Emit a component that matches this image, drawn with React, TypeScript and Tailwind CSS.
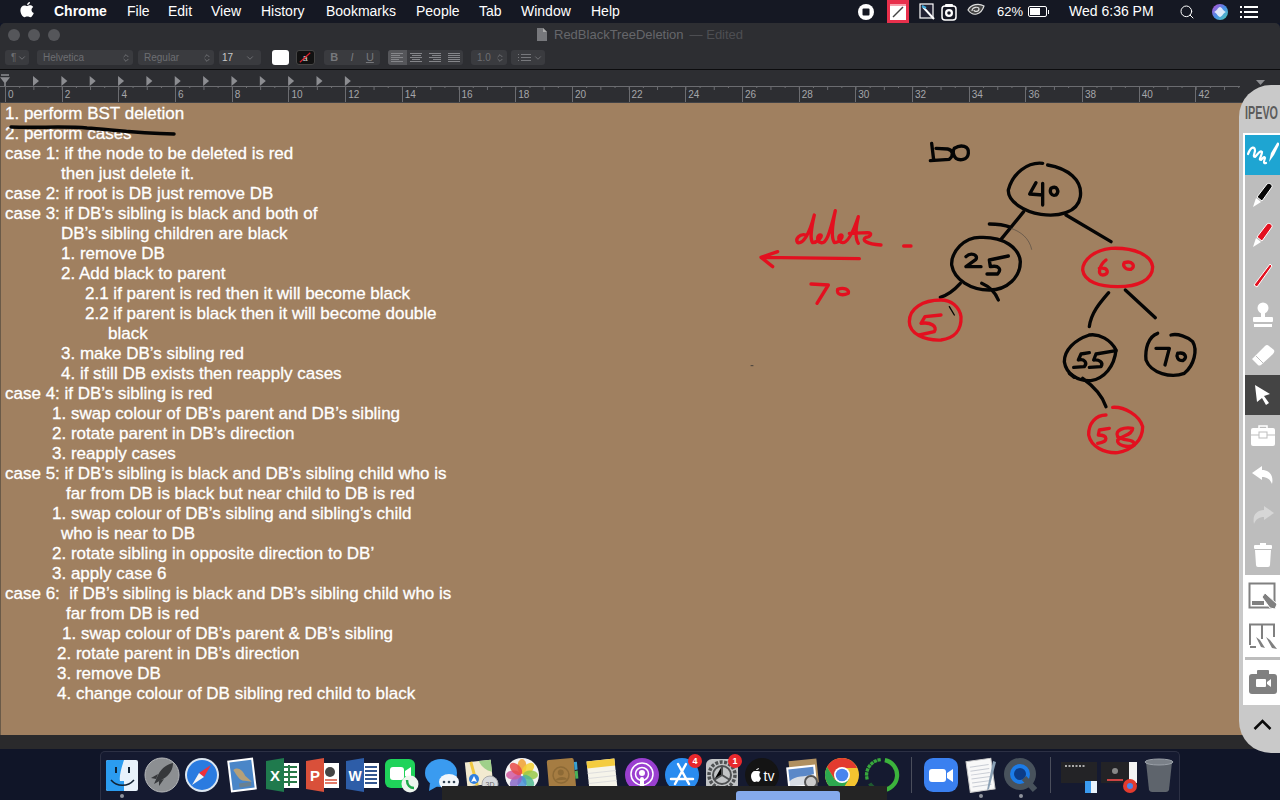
import React from "react";
import { ChevronDown, ChevronsUpDown, Search } from "lucide-react";

const sans = "font-['Liberation_Sans',Arial,sans-serif]";

const lines: [number, string][] = [
  [5, "1. perform BST deletion"],
  [5, "2. perform cases"],
  [5, "case 1: if the node to be deleted is red"],
  [61, "then just delete it."],
  [5, "case 2: if root is DB just remove DB"],
  [5, "case 3: if DB’s sibling is black and both of"],
  [61, "DB’s sibling children are black"],
  [61, "1. remove DB"],
  [61, "2. Add black to parent"],
  [85, "2.1 if parent is red then it will become black"],
  [85, "2.2 if parent is black then it will become double"],
  [108, "black"],
  [61, "3. make DB’s sibling red"],
  [61, "4. if still DB exists then reapply cases"],
  [5, "case 4: if DB’s sibling is red"],
  [52, "1. swap colour of DB’s parent and DB’s sibling"],
  [52, "2. rotate parent in DB’s direction"],
  [52, "3. reapply cases"],
  [5, "case 5: if DB’s sibling is black and DB’s sibling child who is"],
  [66, "far from DB is black but near child to DB is red"],
  [52, "1. swap colour of DB’s sibling and sibling’s child"],
  [61, "who is near to DB"],
  [52, "2. rotate sibling in opposite direction to DB’"],
  [52, "3. apply case 6"],
  [5, "case 6:  if DB’s sibling is black and DB’s sibling child who is"],
  [66, "far from DB is red"],
  [62, "1. swap colour of DB’s parent & DB’s sibling"],
  [57, "2. rotate parent in DB’s direction"],
  [57, "3. remove DB"],
  [57, "4. change colour of DB sibling red child to black"],
];

const menus: [string, number][] = [
  ["File", 127], ["Edit", 168], ["View", 211], ["History", 261], ["Bookmarks", 326],
  ["People", 416], ["Tab", 479], ["Window", 521], ["Help", 591],
];

function MenuBar() {
  return (
    <div className={`h-[23px] shrink-0 flex items-center bg-[#151823] text-white text-[14px] ${sans}`}>
      <svg width="14" height="16" viewBox="0 0 14 16" className="ml-[20px] mb-[3px]" fill="white">
        <path d="M10 0c.1 1.300-1.100 3-2.900 3C7 1.600 8.400.2 10 0zM7.200 4c.8 0 1.700-.7 3-.7 1.100 0 2.300.6 3 1.600-2.500 1.500-2.100 5 .6 6.100-.7 1.800-2.100 4.300-3.500 4.300-1.100 0-1.500-.7-2.900-.7-1.400 0-1.900.7-2.900.7C2.800 15.300.4 11.600.4 8.300c0-3.100 2-4.900 4-4.900 1.200 0 2.100.6 2.800.6z" />
      </svg>
      <span className="font-bold ml-[20px] w-[73px]">Chrome</span>
      {menus.map(([m, x], i) => (
        <span key={m} style={{ width: (menus[i + 1]?.[1] ?? 620) - x }}>{m}</span>
      ))}
      <svg width="16" height="16" viewBox="0 0 16 16" className="ml-[238px]">
        <circle cx="8" cy="8" r="8" fill="white" />
        <rect x="4.500" y="4.500" width="7" height="7" rx="1" fill="#151823" />
      </svg>
      <div className="ml-[13px] w-[22px] h-[23px] bg-[#e8304c] flex items-center justify-center">
        <svg width="16" height="16" viewBox="0 0 16 16">
          <rect width="16" height="16" fill="white" />
          <path d="M3 13 L13 3" stroke="#444" strokeWidth="1.500" />
          <rect y="0" width="16" height="2" fill="#f8a0ac" />
        </svg>
      </div>
      <svg width="17" height="18" viewBox="0 0 17 18" className="ml-[10px]">
        <rect x="1" y="1" width="13" height="14" fill="#223" stroke="white" strokeWidth="1.200" />
        <path d="M4 4 L15 16" stroke="white" strokeWidth="2" />
        <path d="M3 3 L7 5" stroke="#39a9dc" strokeWidth="2" />
      </svg>
      <svg width="16" height="18" viewBox="0 0 16 18" className="ml-[5px]">
        <rect x="1" y="3" width="14" height="14" rx="3" fill="none" stroke="white" strokeWidth="1.500" />
        <circle cx="8" cy="10" r="4" fill="white" />
        <circle cx="8" cy="10" r="1.800" fill="#151823" />
        <rect x="4" y="1" width="8" height="3" rx="1" fill="white" />
      </svg>
      <svg width="18" height="14" viewBox="0 0 18 14" className="ml-[10px] mb-[3px]" fill="none" stroke="#ddd" strokeWidth="1.200">
        <path d="M1 7 C4 1 12 0 17 3 C14 12 6 14 1 7z" fill="#444" />
        <path d="M5 8 C5 4 12 3 12 6 C12 9 7 9 7 7" />
      </svg>
      <span className="ml-[12px] text-[13px]">62%</span>
      <div className="ml-[5px] w-[19px] h-[11px] border border-white rounded-[2px] p-[1px]">
        <div className="w-[10px] h-full bg-white" />
      </div>
      <div className="w-[1px] h-[4px] bg-white ml-[1px]" />
      <span className="ml-[20px]">Wed 6:36 PM</span>
      <Search size={16} strokeWidth={1.500} className="ml-[25px]" />
      <svg width="16" height="16" viewBox="0 0 16 16" className="ml-[17px]">
        <defs>
          <linearGradient id="siri" x1="0" y1="0" x2="1" y2="1">
            <stop offset="0" stopColor="#c04ad0" />
            <stop offset="0.500" stopColor="#4a8ee8" />
            <stop offset="1" stopColor="#50d0b0" />
          </linearGradient>
        </defs>
        <circle cx="8" cy="8" r="8" fill="url(#siri)" />
        <path d="M2 8 C5 7 6 3 8 3 C10 3 11 7 14 8 C11 9 10 13 8 13 C6 13 5 9 2 8z" fill="white" opacity="0.800" />
      </svg>
      <svg width="18" height="12" viewBox="0 0 18 12" className="ml-[12px]" fill="white">
        <rect width="2" height="2" /><rect x="4" width="14" height="2" />
        <rect y="5" width="2" height="2" /><rect x="4" y="5" width="14" height="2" />
        <rect y="10" width="2" height="2" /><rect x="4" y="10" width="14" height="2" />
      </svg>
    </div>
  );
}

function Select({ w, label, ml, stepper = true }: { w: number; label: string; ml: number; stepper?: boolean }) {
  return (
    <div style={{ width: w, marginLeft: ml }} className="h-[15px] rounded-[3px] bg-[#3a3b3f] flex items-center justify-between pl-[6px] pr-[2px] text-[10px] text-[#6d6e72]">
      <span>{label}</span>
      {stepper ? <ChevronsUpDown size={10} color="#77787c" /> : <ChevronDown size={10} color="#77787c" />}
    </div>
  );
}

function AlignIcon({ kind, active }: { kind: number; active?: boolean }) {
  const rows = [12, 9, 12, 8, 12];
  return (
    <div className={`w-[18.750px] h-full flex flex-col justify-center gap-[1px] ${active ? "bg-[#55565a]" : ""} ${kind === 0 ? "items-start pl-[3px]" : kind === 1 ? "items-center" : "items-end pr-[3px]"}`}>
      {rows.map((r, i) => (
        <div key={i} style={{ width: kind === 3 ? 12 : r }} className="h-[1px] bg-[#85868a]" />
      ))}
    </div>
  );
}

function Toolbar() {
  return (
    <div className={`h-[47px] shrink-0 bg-[#2d2e32] border-b border-[#0c0c0e] rounded-t-[5px] ${sans}`}>
      <div className="h-[23px] flex items-center relative">
        <div className="ml-[8px] flex gap-[8px]">
          <div className="w-[12px] h-[12px] rounded-full bg-[#55565a]" />
          <div className="w-[12px] h-[12px] rounded-full bg-[#55565a]" />
          <div className="w-[12px] h-[12px] rounded-full bg-[#55565a]" />
        </div>
        <svg width="10" height="13" viewBox="0 0 10 13" className="ml-[477px]">
          <path d="M0 0h6l4 4v9H0z" fill="#77787c" />
          <path d="M6 0v4h4z" fill="#aaa" />
        </svg>
        <span className="ml-[7px] text-[13px] text-[#66676b]">RedBlackTreeDeletion</span>
        <span className="ml-[6px] text-[13px] text-[#4d4e52]">— Edited</span>
      </div>
      <div className="mt-[4px] flex items-center">
        <Select w={24} label="¶" ml={5} stepper={false} />
        <Select w={96} label="Helvetica" ml={8} />
        <Select w={76} label="Regular" ml={5} />
        <div className="ml-[5px] w-[42px] h-[15px] rounded-[3px] bg-[#3a3b3f] flex text-[10px] text-[#c8c8c8] items-center pl-[3px]">
          <span className="w-[23px]">17</span>
          <ChevronDown size={10} color="#77787c" />
        </div>
        <div className="ml-[11px] w-[17px] h-[15px] rounded-[3px] bg-white" />
        <div className="ml-[7px] w-[19px] h-[15px] rounded-[3px] bg-[#111] border border-[#444]">
          <svg viewBox="0 0 19 15" className="w-full h-full">
            <text x="9" y="11" fontSize="10" fill="#ddd" textAnchor="middle">a</text>
            <path d="M3 13 L15 2" stroke="#e0202c" strokeWidth="1.300" />
          </svg>
        </div>
        <div className="ml-[9px] w-[56px] h-[15px] rounded-[3px] bg-[#3a3b3f] flex text-[11px] text-[#77787c] items-center justify-around">
          <b>B</b><i>I</i><u>U</u>
        </div>
        <div className="ml-[8px] w-[75px] h-[15px] rounded-[3px] bg-[#3a3b3f] flex overflow-hidden">
          <AlignIcon kind={0} active /><AlignIcon kind={1} /><AlignIcon kind={2} /><AlignIcon kind={3} />
        </div>
        <Select w={36} label="1.0" ml={8} />
        <div className="ml-[4px] w-[34px] h-[15px] rounded-[3px] bg-[#3a3b3f] flex items-center justify-end pr-[2px] gap-[2px]">
          <svg width="13" height="8" viewBox="0 0 13 8" fill="#77787c">
            <rect width="1" height="1" /><rect x="3" width="10" height="1" />
            <rect y="3" width="1" height="1" /><rect x="3" y="3" width="10" height="1" />
            <rect y="6" width="1" height="1" /><rect x="3" y="6" width="10" height="1" />
          </svg>
          <ChevronDown size={10} color="#77787c" />
        </div>
      </div>
    </div>
  );
}

function Ruler() {
  const labels = Array.from({ length: 22 }, (_, i) => i * 2);
  return (
    <div className={`relative h-[33px] shrink-0 bg-[#2d2e32] border-b border-[#414246] ${sans}`}>
      <svg width="1280" height="33" className="absolute left-0 top-0">
        <path d="M0 16.500 H1240" stroke="#6b6c70" strokeWidth="1" />
        {Array.from({ length: 88 }, (_, i) => (
          <path key={i} d={`M${5.5 + i * 14.175} 16 V${i % 2 ? 18 : 20}`} stroke="#6b6c70" strokeWidth="1" />
        ))}
        {Array.from({ length: 12 }, (_, i) => (
          <path key={i} d={`M${33 + i * 28.35} 6 L${39 + i * 28.35} 11 L${33 + i * 28.35} 16z`} fill="#8c8d91" />
        ))}
        <path d="M1 5 H9 M1.500 8 H8.500 L5 12.500z M5 12 V16" stroke="#8c8d91" strokeWidth="1.500" fill="#8c8d91" />
        <path d="M1256 10 H1265 L1260.500 15z" fill="#8c8d91" />
      </svg>
      <div className="absolute left-[5px] top-[17px] flex text-[10px] leading-[15px] text-[#a5a6aa]">
        {labels.map((n) => (
          <div key={n} className="w-[56.700px] h-[15px] border-l border-[#6b6c70] pl-[2px]">{n}</div>
        ))}
      </div>
    </div>
  );
}

// pen strokes drawn on screen, coordinates taken at 3x the crop
function Sketch() {
  const black = "#050505";
  const red = "#e3101f";
  return (
    <svg width="480" height="350" viewBox="0 0 1440 1050" fill="none" strokeLinecap="round" strokeLinejoin="round" className="absolute left-[740px] top-[17px]">
      <g stroke={black} strokeWidth="10">
        <path d="M572 70 L578 120 M568 122 L625 118 C640 105 635 90 620 87 L585 85 M640 85 C660 72 685 78 682 100 C680 122 655 122 645 115 C635 105 635 92 640 85" />
        <path d="M905 130 C860 125 815 160 802 210 C800 245 850 275 900 283 C950 290 1010 280 1018 230 C1025 180 980 145 920 135" />
        <path d="M885 188 L866 222 L905 225 M905 190 L905 255 M930 205 C950 195 955 215 945 225 C930 230 925 215 930 205" />
        <path d="M848 275 L780 358 M745 312 C770 312 790 315 810 322 M975 285 L1110 365" />
        <path d="M720 352 C670 350 630 395 632 435 C640 480 690 510 745 510 C800 510 838 470 838 425 C835 385 790 350 720 352" />
        <path d="M675 410 C690 395 712 405 705 418 L675 440 L720 440 M802 408 L745 420 L748 440 C775 435 782 448 770 462 L738 462" />
        <path d="M658 490 C640 510 620 525 598 532 M722 490 C745 500 762 515 772 540" />
        <path d="M1103 518 C1075 550 1050 580 1045 620 M1153 510 L1243 593" />
        <path d="M1045 645 C1000 660 970 690 970 725 C975 760 1010 785 1050 782 C1090 775 1120 740 1125 690 C1110 660 1075 640 1045 645" />
        <path d="M1045 698 L1020 702 L1012 720 C1030 715 1040 728 1030 740 L998 742 M1125 692 L1065 702 L1058 720 C1075 718 1088 728 1080 740 L1045 742" />
        <path d="M1250 640 C1220 650 1212 690 1215 720 C1230 760 1290 775 1330 760 C1360 735 1370 690 1355 665 C1340 650 1310 640 1290 645" />
        <path d="M1245 685 L1285 685 L1272 735 M1310 700 C1335 695 1340 715 1325 722 C1310 722 1305 710 1310 700" />
        <path d="M985 760 L1000 772 M1025 775 C1060 800 1085 830 1095 860" />
      </g>
      <path d="M625 560 L640 585" stroke={black} strokeWidth="4" />
      <path d="M810 325 C840 335 865 355 872 388" stroke="#3a3a3a" strokeWidth="1.500" />
      <path d="M30 737 H36" stroke="#333" strokeWidth="2.500" />
      <g stroke={red} strokeWidth="10">
        <path d="M600 540 C545 540 505 565 505 605 C505 640 550 662 600 660 C640 655 662 630 660 590 C655 560 630 540 600 540" />
        <path d="M600 585 L552 590 L540 610 C570 605 590 620 580 635 L535 645" />
        <path d="M1110 385 C1060 390 1025 420 1025 450 C1030 485 1075 500 1130 500 C1190 500 1235 480 1235 440 C1230 405 1180 382 1110 385" />
        <path d="M1095 420 C1075 435 1068 465 1085 465 C1105 465 1105 440 1075 445 M1150 428 C1175 420 1185 440 1170 448 C1150 450 1145 435 1150 428" />
        <path d="M1095 885 C1065 885 1042 910 1043 945 C1050 980 1090 1000 1130 998 C1175 990 1205 960 1205 920 C1195 885 1150 860 1115 862" />
        <path d="M1105 925 L1075 930 L1072 945 C1100 945 1105 965 1070 970 M1175 925 C1150 920 1120 930 1130 950 C1150 965 1180 955 1180 975 C1160 985 1125 975 1130 960 C1145 945 1175 945 1175 925" />
        <path d="M195 345 C175 340 162 358 170 368 C185 372 205 345 220 285 C212 320 205 355 215 368 C228 368 245 350 240 345 C228 342 225 365 240 368 C255 372 265 345 283 272 C275 310 268 350 280 368 C295 368 308 350 302 345 C290 342 290 368 305 368 C320 368 335 340 352 290 C345 320 342 355 352 370 M325 340 L380 338 C395 338 390 350 375 352 C360 360 375 372 420 375" />
        <path d="M62 412 L355 416 M110 395 L60 412 L95 440" />
        <path d="M210 492 L262 495 L228 550 M290 508 C310 500 325 510 322 520 C305 528 285 525 290 508" />
        <path d="M488 378 H510" />
      </g>
    </svg>
  );
}

function Content() {
  return (
    <div className="relative flex-1 bg-[#a08060] overflow-hidden border-l border-[#6a5a48]">
      <div className={`pt-[1px] text-[17px] leading-[20px] text-white whitespace-pre [-webkit-text-stroke:0.3px_white] ${sans}`}>
        {lines.map(([x, t], i) => (
          <div key={i} style={{ paddingLeft: x - 1 }}>{t}</div>
        ))}
      </div>
      <svg width="180" height="12" viewBox="0 0 180 12" fill="none" className="absolute left-[6px] top-[22px]">
        <path d="M4 2 C30 3 60 1 80 3 C100 4 125 8 167 9" stroke="#050505" strokeWidth="3.500" strokeLinecap="round" />
      </svg>
      <Sketch />
    </div>
  );
}

const Cell = ({ bg = "", children }: { bg?: string; children: React.ReactNode }) => (
  <div className={`h-10 flex items-center justify-center ${bg}`}>{children}</div>
);

function Panel() {
  return (
    <div className={`absolute right-0 top-[85px] w-[41px] h-[668px] bg-[#c9c9c9] rounded-l-[32px] flex flex-col ${sans}`}>
      <div className="h-[48px] shrink-0 pt-[19px] pl-[6px]">
        <div className="w-[35px] origin-left scale-x-[0.6] text-[18px] leading-[18px] font-bold text-[#5c5c5c] whitespace-nowrap">IPEVO</div>
      </div>
      <div className="ml-[4px] border-l-2 border-t-2 border-white bg-[#bdbdbd]">
        <Cell bg="bg-[#1ea5d2]">
          <svg width="32" height="30" viewBox="0 0 32 30" fill="white">
            <path d="M1 14 C4 6 8 6 8 11 C7 15 6 17 8 17 C11 14 13 10 15 12 C15 16 11 20 14 20 C16 18 17 16 18 18 C17 21 16 24 19 23" fill="none" stroke="white" strokeWidth="2.200" strokeLinecap="round" />
            <path d="M22 22 L24 13 L30 3 C31 2 33 3 32 5 L27 15z" />
          </svg>
        </Cell>
        <Cell>
          <svg width="22" height="26" viewBox="0 0 22 26">
            <path d="M1 25 L4 16 L9 20z" fill="white" />
            <path d="M5 15 L15 2 C17 0 21 3 20 5 L10 19z" fill="#050505" stroke="white" strokeWidth="1" />
          </svg>
        </Cell>
        <Cell>
          <svg width="22" height="26" viewBox="0 0 22 26">
            <path d="M1 25 L4 16 L9 20z" fill="white" />
            <path d="M5 15 L15 2 C17 0 21 3 20 5 L10 19z" fill="#e3101f" stroke="white" strokeWidth="1" />
          </svg>
        </Cell>
        <Cell>
          <svg width="22" height="26" viewBox="0 0 22 26">
            <path d="M2 23 L18 2 L20 4 L5 25z" fill="#e3101f" stroke="white" strokeWidth="1" />
          </svg>
        </Cell>
        <Cell>
          <svg width="22" height="26" viewBox="0 0 22 26" fill="white">
            <circle cx="11" cy="6" r="5.500" />
            <rect x="9" y="9" width="4" height="6" />
            <rect x="1" y="15" width="20" height="5" rx="1" />
            <rect x="2" y="22" width="18" height="3" />
          </svg>
        </Cell>
        <Cell>
          <svg width="24" height="24" viewBox="0 0 24 24" fill="white">
            <path d="M1 16 L14 3 Q16 1 18 3 L23 7 Q24 9 22 11 L10 22 Q8 23 7 22z" />
            <path d="M5 13 L12 20" stroke="#bdbdbd" strokeWidth="1" />
          </svg>
        </Cell>
        <Cell bg="bg-[#444444]">
          <svg width="18" height="22" viewBox="0 0 18 22" fill="white">
            <path d="M1 1 L16 10 L10 12 L15 19 L12 21 L8 14 L3 18z" />
          </svg>
        </Cell>
        <Cell>
          <svg width="24" height="22" viewBox="0 0 24 22">
            <path d="M8 4 V2 H16 V4" fill="none" stroke="white" strokeWidth="1.500" />
            <rect y="4" width="24" height="18" rx="2" fill="white" />
            <path d="M0 11 H24" stroke="#bdbdbd" strokeWidth="1" />
            <rect x="8" y="8" width="8" height="6" fill="white" stroke="#bdbdbd" />
          </svg>
        </Cell>
        <Cell>
          <svg width="22" height="18" viewBox="0 0 22 18" fill="white">
            <path d="M0 7 L10 0 V4 C17 4 22 9 20 18 C18 13 15 11 10 11 V14z" />
          </svg>
        </Cell>
        <Cell>
          <svg width="22" height="18" viewBox="0 0 22 18" fill="#d6d6d6">
            <path d="M22 7 L12 0 V4 C5 4 0 9 2 18 C4 13 7 11 12 11 V14z" />
          </svg>
        </Cell>
        <Cell>
          <svg width="20" height="24" viewBox="0 0 20 24" fill="white">
            <rect x="7" y="0" width="6" height="3" />
            <rect x="1" y="2" width="18" height="4" rx="1" />
            <path d="M2 7 H18 L17 22 Q17 24 15 24 H5 Q3 24 3 22z" />
          </svg>
        </Cell>
      </div>
      <div className="ml-[4px] border-l-2 border-white bg-white flex-1 flex flex-col items-center">
        <svg width="30" height="30" viewBox="0 0 30 30" className="mt-[7px]">
          <rect x="1.500" y="1.500" width="25" height="24" fill="none" stroke="#808080" strokeWidth="2" />
          <rect x="4" y="19" width="12" height="4" fill="#808080" />
          <path d="M14 15 L17 11 L29 22 L27 27 L22 26z" fill="#808080" stroke="white" strokeWidth="1" />
        </svg>
        <svg width="30" height="28" viewBox="0 0 30 28" className="mt-[11px]">
          <path d="M2 22 V1.500 H26 V14 M14 1.500 V16 M2 24 H8" fill="none" stroke="#808080" strokeWidth="2" />
          <path d="M8 14 L12 17 L17 25 L13 24z M18 14 L22 17 L29 26 L24 25z" fill="#808080" />
        </svg>
        <div className="w-full h-[3px] bg-[#bdbdbd] mt-[6px]" />
        <svg width="28" height="24" viewBox="0 0 28 24" className="mt-[10px]" fill="#808080">
          <rect y="4" width="28" height="20" rx="3" />
          <rect x="8" y="0" width="12" height="6" rx="1" />
          <rect x="7" y="9" width="10" height="8" rx="1" fill="white" />
          <path d="M18 12 L22 9 V17 L18 14z" fill="white" />
        </svg>
        <div className="flex-1" />
      </div>
      <div className="h-[48px] shrink-0 flex items-start justify-center pt-[14px] pl-[6px]">
        <svg width="19" height="11" viewBox="0 0 18 11" fill="none" stroke="#0a0a0a" strokeWidth="2.500">
          <path d="M1 10 L9 2 L17 10" />
        </svg>
      </div>
    </div>
  );
}

const ringBlocks = [205, 220, 235, 250, 265, 280, 295];

const icons: React.ReactNode[] = [
  // finder
  <svg viewBox="0 0 36 36"><rect x="2" y="3" width="32" height="31" rx="2" fill="#e8f2fb" /><path d="M2 5 Q2 3 4 3 H20 C17 12 15 20 16 24 H20 V34 H4 Q2 34 2 32z" fill="#2b9cf0" /><rect x="11" y="10" width="2" height="6" fill="#123" /><rect x="24" y="10" width="2" height="6" fill="#123" /><path d="M7 23 C13 30 24 30 30 23" stroke="#123" strokeWidth="1.500" fill="none" /></svg>,
  // launchpad
  <svg viewBox="0 0 36 36"><circle cx="18" cy="18" r="17" fill="#8c8f92" stroke="#b5b7b9" /><path d="M10 27 L14 18 C18 10 24 7 29 6 C29 12 26 18 19 22z M7 21 L14 17 L12 22z M15 29 L20 22 L15 24z" fill="#36383b" /></svg>,
  // safari
  <svg viewBox="0 0 36 36"><circle cx="18" cy="18" r="17" fill="#dce6f0" /><circle cx="18" cy="18" r="15" fill="#2a7be0" /><path d="M27 8 L20 20 L15 16z" fill="#f0303a" /><path d="M8 28 L20 20 L15 16z" fill="#f4f4f4" /></svg>,
  // mail stamp
  <svg viewBox="0 0 36 36"><g transform="rotate(-7 18 18)"><rect x="5" y="2" width="26" height="32" fill="white" /><rect x="7" y="4" width="22" height="28" fill="#4a86c8" /><path d="M10 12 C15 9 19 13 21 19 L27 26 L20 24 C15 24 13 18 10 12z" fill="#b5a078" /><path d="M14 26 H26 V30 H14z" fill="#8a7a58" opacity="0.500" /></g></svg>,
  // excel
  <svg viewBox="0 0 36 36"><rect x="17" y="6" width="18" height="25" fill="white" /><path d="M20 10 H33 M20 15 H33 M20 20 H33 M20 25 H33 M25 8 V29" stroke="#2a7a4a" strokeWidth="2" /><path d="M2 4 L20 1 V35 L2 32z" fill="#1f7a4d" /><text x="11" y="24" fontSize="15" fill="white" fontWeight="700" textAnchor="middle" fontFamily="Liberation Sans">X</text></svg>,
  // powerpoint
  <svg viewBox="0 0 36 36"><rect x="17" y="6" width="18" height="25" fill="white" /><circle cx="26" cy="15" r="5" fill="#444" /><path d="M21 23 H33 M21 26 H33" stroke="#d9503a" strokeWidth="1.500" /><path d="M2 4 L20 1 V35 L2 32z" fill="#d9503a" /><text x="11" y="24" fontSize="15" fill="white" fontWeight="700" textAnchor="middle" fontFamily="Liberation Sans">P</text></svg>,
  // word
  <svg viewBox="0 0 36 36"><rect x="17" y="6" width="18" height="25" fill="white" /><path d="M21 10 H33 M21 14 H33 M21 18 H33 M21 22 H33 M21 26 H33" stroke="#34568f" strokeWidth="2" /><path d="M2 4 L20 1 V35 L2 32z" fill="#2d5da8" /><text x="11" y="24" fontSize="14" fill="white" fontWeight="700" textAnchor="middle" fontFamily="Liberation Sans">W</text></svg>,
  // facetime
  <svg viewBox="0 0 36 36"><rect x="1" y="2" width="30" height="29" rx="6" fill="#1fd35a" /><rect x="6" y="10" width="14" height="13" rx="3" fill="white" /><path d="M21 14 L27 10 V23 L21 19z" fill="white" /><circle cx="26" cy="27" r="8.500" fill="#eef5ee" /><path d="M23 23 C23 28 26 31 30 31" stroke="#1fa84a" strokeWidth="2.500" fill="none" /></svg>,
  // messages
  <svg viewBox="0 0 36 36"><ellipse cx="17" cy="16" rx="16" ry="14" fill="#3a9bf0" /><path d="M6 26 L5 34 L14 29z" fill="#3a9bf0" /><ellipse cx="25" cy="25" rx="10" ry="8" fill="#f2f6fa" /><circle cx="20" cy="25" r="1.300" fill="#345" /><circle cx="25" cy="25" r="1.300" fill="#345" /><circle cx="30" cy="25" r="1.300" fill="#345" /></svg>,
  // maps
  <svg viewBox="0 0 36 36"><g transform="rotate(-6 16 16)"><rect x="2" y="4" width="26" height="24" fill="#f2ead0" /><path d="M16 4 H28 V16 C22 14 18 10 16 4z" fill="#9fd08a" /><path d="M8 4 L12 28" stroke="#f0c840" strokeWidth="3" /></g><circle cx="10" cy="22" r="5" fill="#2f7fe0" /><path d="M10 19 L13 25 L10 24 L7 25z" fill="white" /><circle cx="26" cy="27" r="8" fill="#d8dadc" stroke="#aaa" /><text x="26" y="30" fontSize="7" fill="#666" textAnchor="middle" fontFamily="Liberation Sans">3D</text></svg>,
  // photos
  <svg viewBox="0 0 36 36"><circle cx="18" cy="18" r="17" fill="#f4f4f4" />{["#f0a030", "#f4d030", "#98c848", "#50b890", "#4a90d8", "#8868c8", "#d058a0", "#e84a48"].map((c, i) => (<ellipse key={c} cx="18" cy="9.500" rx="4.500" ry="7.500" fill={c} opacity="0.850" transform={`rotate(${i * 45} 18 18)`} />))}</svg>,
  // contacts
  <svg viewBox="0 0 36 36"><g transform="rotate(-5 18 18)"><rect x="4" y="2" width="27" height="31" rx="2" fill="#a57c42" /><rect x="31" y="6" width="3" height="8" fill="#3aa0d0" /><rect x="31" y="15" width="3" height="8" fill="#48b058" /><circle cx="17" cy="18" r="8" fill="none" stroke="#8d6a36" strokeWidth="1.500" /><circle cx="17" cy="15.500" r="3" fill="#8d6a36" /><path d="M11 23 C13 19 21 19 23 23" fill="#8d6a36" /></g></svg>,
  // notes
  <svg viewBox="0 0 36 36"><g transform="rotate(-6 18 18)"><rect x="4" y="3" width="28" height="30" fill="#f6f4ea" /><rect x="4" y="3" width="28" height="7" fill="#f4cc40" /><path d="M4 15 H32 M4 20 H32 M4 25 H32" stroke="#ddd" /></g></svg>,
  // podcasts
  <svg viewBox="0 0 36 36"><circle cx="18" cy="18" r="17" fill="#9a3fd0" /><circle cx="18" cy="17" r="11" fill="none" stroke="white" strokeWidth="1.500" /><circle cx="18" cy="17" r="6.500" fill="none" stroke="white" strokeWidth="1.500" /><circle cx="18" cy="16" r="3" fill="white" /><rect x="16" y="20" width="4" height="11" rx="2" fill="white" /></svg>,
  // app store
  <svg viewBox="0 0 36 36"><circle cx="18" cy="18" r="17" fill="#2a8cf0" /><path d="M22 7 L11 27 M14 7 L25 27 M7 22 H29" stroke="white" strokeWidth="2.500" strokeLinecap="round" /></svg>,
  // system preferences
  <svg viewBox="0 0 36 36"><rect x="2" y="2" width="32" height="32" rx="6" fill="#c2c4c6" /><circle cx="18" cy="18" r="13" fill="none" stroke="#4e5052" strokeWidth="3.500" strokeDasharray="3 1.500" /><circle cx="18" cy="18" r="9" fill="none" stroke="#4e5052" strokeWidth="2" /><path d="M18 9 V18 L10 23 M18 18 L26 23" stroke="#4e5052" strokeWidth="2" /></svg>,
  // apple tv
  <svg viewBox="0 0 36 36"><circle cx="18" cy="18" r="17" fill="#141414" /><path d="M12 13 C14 13 15 12 15 11 C14 11 12 12 12 13z M11 14 C9 14 7 16 7 19 C7 22 9 25 10.500 25 C12 25 12 24 14 25 C15.500 25 16.500 22 17 21 C15 20 15 16 16.500 15 C15 13.500 13 14 11 14z" fill="white" /><text x="25" y="24" fontSize="14" fill="white" textAnchor="middle" fontFamily="Liberation Sans">tv</text></svg>,
  // preview
  <svg viewBox="0 0 36 36"><g transform="rotate(-6 18 18)"><rect x="6" y="3" width="28" height="24" fill="#b09060" /><rect x="3" y="9" width="29" height="22" fill="white" /><rect x="5" y="11" width="25" height="12" fill="#5a88c8" /><path d="M5 23 C12 17 20 21 30 18 V28 H5z" fill="#d8dde4" /></g><circle cx="27" cy="25" r="6" fill="#ccc" stroke="#555" strokeWidth="2" /></svg>,
  // chrome
  <svg viewBox="0 0 36 36"><circle cx="18" cy="18" r="17" fill="#f4c430" /><path d="M18 1 A17 17 0 0 0 3 10 L11 23 L18 11 H33 A17 17 0 0 0 18 1z" fill="#e33b2e" /><path d="M3 10 A17 17 0 0 0 17 35 L25 22 L11 23z" fill="#2da94f" /><circle cx="18" cy="18" r="8" fill="white" /><circle cx="18" cy="18" r="6.300" fill="#4a85ee" /></svg>,
  // green ring
  <svg viewBox="0 0 38 38" className="overflow-visible"><path d="M22 3.300 A16 16 0 0 1 19 35" fill="none" stroke="#3cb43c" strokeWidth="4.500" /><path d="M15 34.500 A16 16 0 0 1 6 28" fill="none" stroke="#1f5a30" strokeWidth="4" />{ringBlocks.map((a) => (<rect key={a} x="17" y="1" width="3.500" height="3.500" fill="#37a83c" transform={`rotate(${a + 55} 19 19)`} />))}</svg>,
];

const rightIcons: React.ReactNode[] = [
  // zoom
  <svg viewBox="0 0 36 36"><rect x="1" y="1" width="34" height="34" rx="9" fill="#3a80f0" /><rect x="6" y="12" width="17" height="13" rx="3" fill="white" /><path d="M24 16 L30 12 V25 L24 21z" fill="white" /></svg>,
  // textedit
  <svg viewBox="0 0 36 36"><g transform="rotate(-8 16 18)"><rect x="5" y="3" width="25" height="31" fill="#f8f8f8" stroke="#ccc" /><path d="M8 9 H27 M8 13 H27 M8 17 H27 M8 21 H27 M8 25 H27 M8 29 H27" stroke="#c8ccd4" /></g><path d="M30 4 L33 5 L26 32 L24 33z" fill="#8aa0b4" /></svg>,
  // quicktime
  <svg viewBox="0 0 36 36"><circle cx="17" cy="17" r="16" fill="#48525c" /><circle cx="17" cy="17" r="10" fill="#1c7ce8" /><circle cx="17" cy="17" r="6" fill="#0c3c88" /><path d="M21 21 L32 33" stroke="#48525c" strokeWidth="6" /></svg>,
];

function DockCell({ children, dot, badge }: { children: React.ReactNode; dot?: boolean; badge?: string }) {
  return (
    <div className="relative w-10 shrink-0 flex flex-col items-center">
      <div className="w-[36px] h-[36px]">{children}</div>
      {dot && <div className="mt-[1px] w-[4px] h-[4px] rounded-full bg-[#8f939c]" />}
      {badge && (
        <span className="absolute top-[-3px] right-[0px] w-[14px] h-[14px] rounded-full bg-[#e8282c] text-white text-[9px] leading-[14px] text-center font-bold">{badge}</span>
      )}
    </div>
  );
}

function Dock() {
  return (
    <div className={`relative mt-[2px] h-[49px] shrink-0 ${sans}`}>
      <div className="ml-[100px] w-[1080px] h-full bg-[#151a30] rounded-t-[5px] border-t border-l border-r border-[#2c3044] flex pt-[5px] pl-[1px]">
        {icons.map((ic, i) => (
          <DockCell key={i} dot={i === 0} badge={i === 14 ? "4" : i === 15 ? "1" : undefined}>{ic}</DockCell>
        ))}
        <div className="w-[1px] h-[36px] bg-[#4a4e5c] ml-[9px] mr-[9px]" />
        {rightIcons.map((ic, i) => (
          <DockCell key={i} dot={i > 0}>{ic}</DockCell>
        ))}
        <div className="w-[1px] h-[36px] bg-[#4a4e5c] ml-[9px] mr-[8px]" />
        <DockCell>
          <svg viewBox="0 0 36 36"><rect x="0" y="5" width="36" height="21" fill="#232326" /><path d="M4 9 H24" stroke="#aaa" strokeWidth="2" strokeDasharray="2 1.500" /><rect x="24" y="24" width="6" height="12" fill="#3a9bf0" /><rect x="30" y="24" width="6" height="12" fill="#e8f2fb" /></svg>
        </DockCell>
        <DockCell>
          <svg viewBox="0 0 36 36"><rect x="0" y="5" width="36" height="21" fill="#232326" /><rect x="28" y="5" width="8" height="21" fill="#f4f4f4" /><circle cx="14" cy="14" r="3" fill="#888" /><rect x="6" y="22" width="16" height="2" fill="#c44" /><circle cx="29" cy="29" r="7" fill="#e33b2e" /><circle cx="29" cy="29" r="3" fill="#4a85ee" /></svg>
        </DockCell>
        <DockCell>
          <svg viewBox="0 0 36 36"><path d="M5 5 H31 L28 33 Q27 35 25 35 H11 Q9 35 8 33z" fill="#5e646c" /><ellipse cx="18" cy="5" rx="14" ry="3" fill="#7a8088" stroke="#9aa0a8" /></svg>
        </DockCell>
      </div>
      <div className="absolute left-[442px] w-[445px] top-[35px] h-[14px] bg-[#242424]">
        <div className="absolute left-[294px] top-[5px] w-[104px] h-[9px] rounded-t-[3px] bg-[#85aaec]" />
      </div>
    </div>
  );
}

export default function App() {
  return (
    <div className="relative w-[1280px] h-[800px] overflow-hidden bg-[#101528] flex flex-col">
      <MenuBar />
      <div className="h-[726px] shrink-0 flex flex-col">
        <Toolbar />
        <Ruler />
        <Content />
        <div className="h-[14px] shrink-0 bg-[#2a2a2c]" />
      </div>
      <Dock />
      <Panel />
    </div>
  );
}
